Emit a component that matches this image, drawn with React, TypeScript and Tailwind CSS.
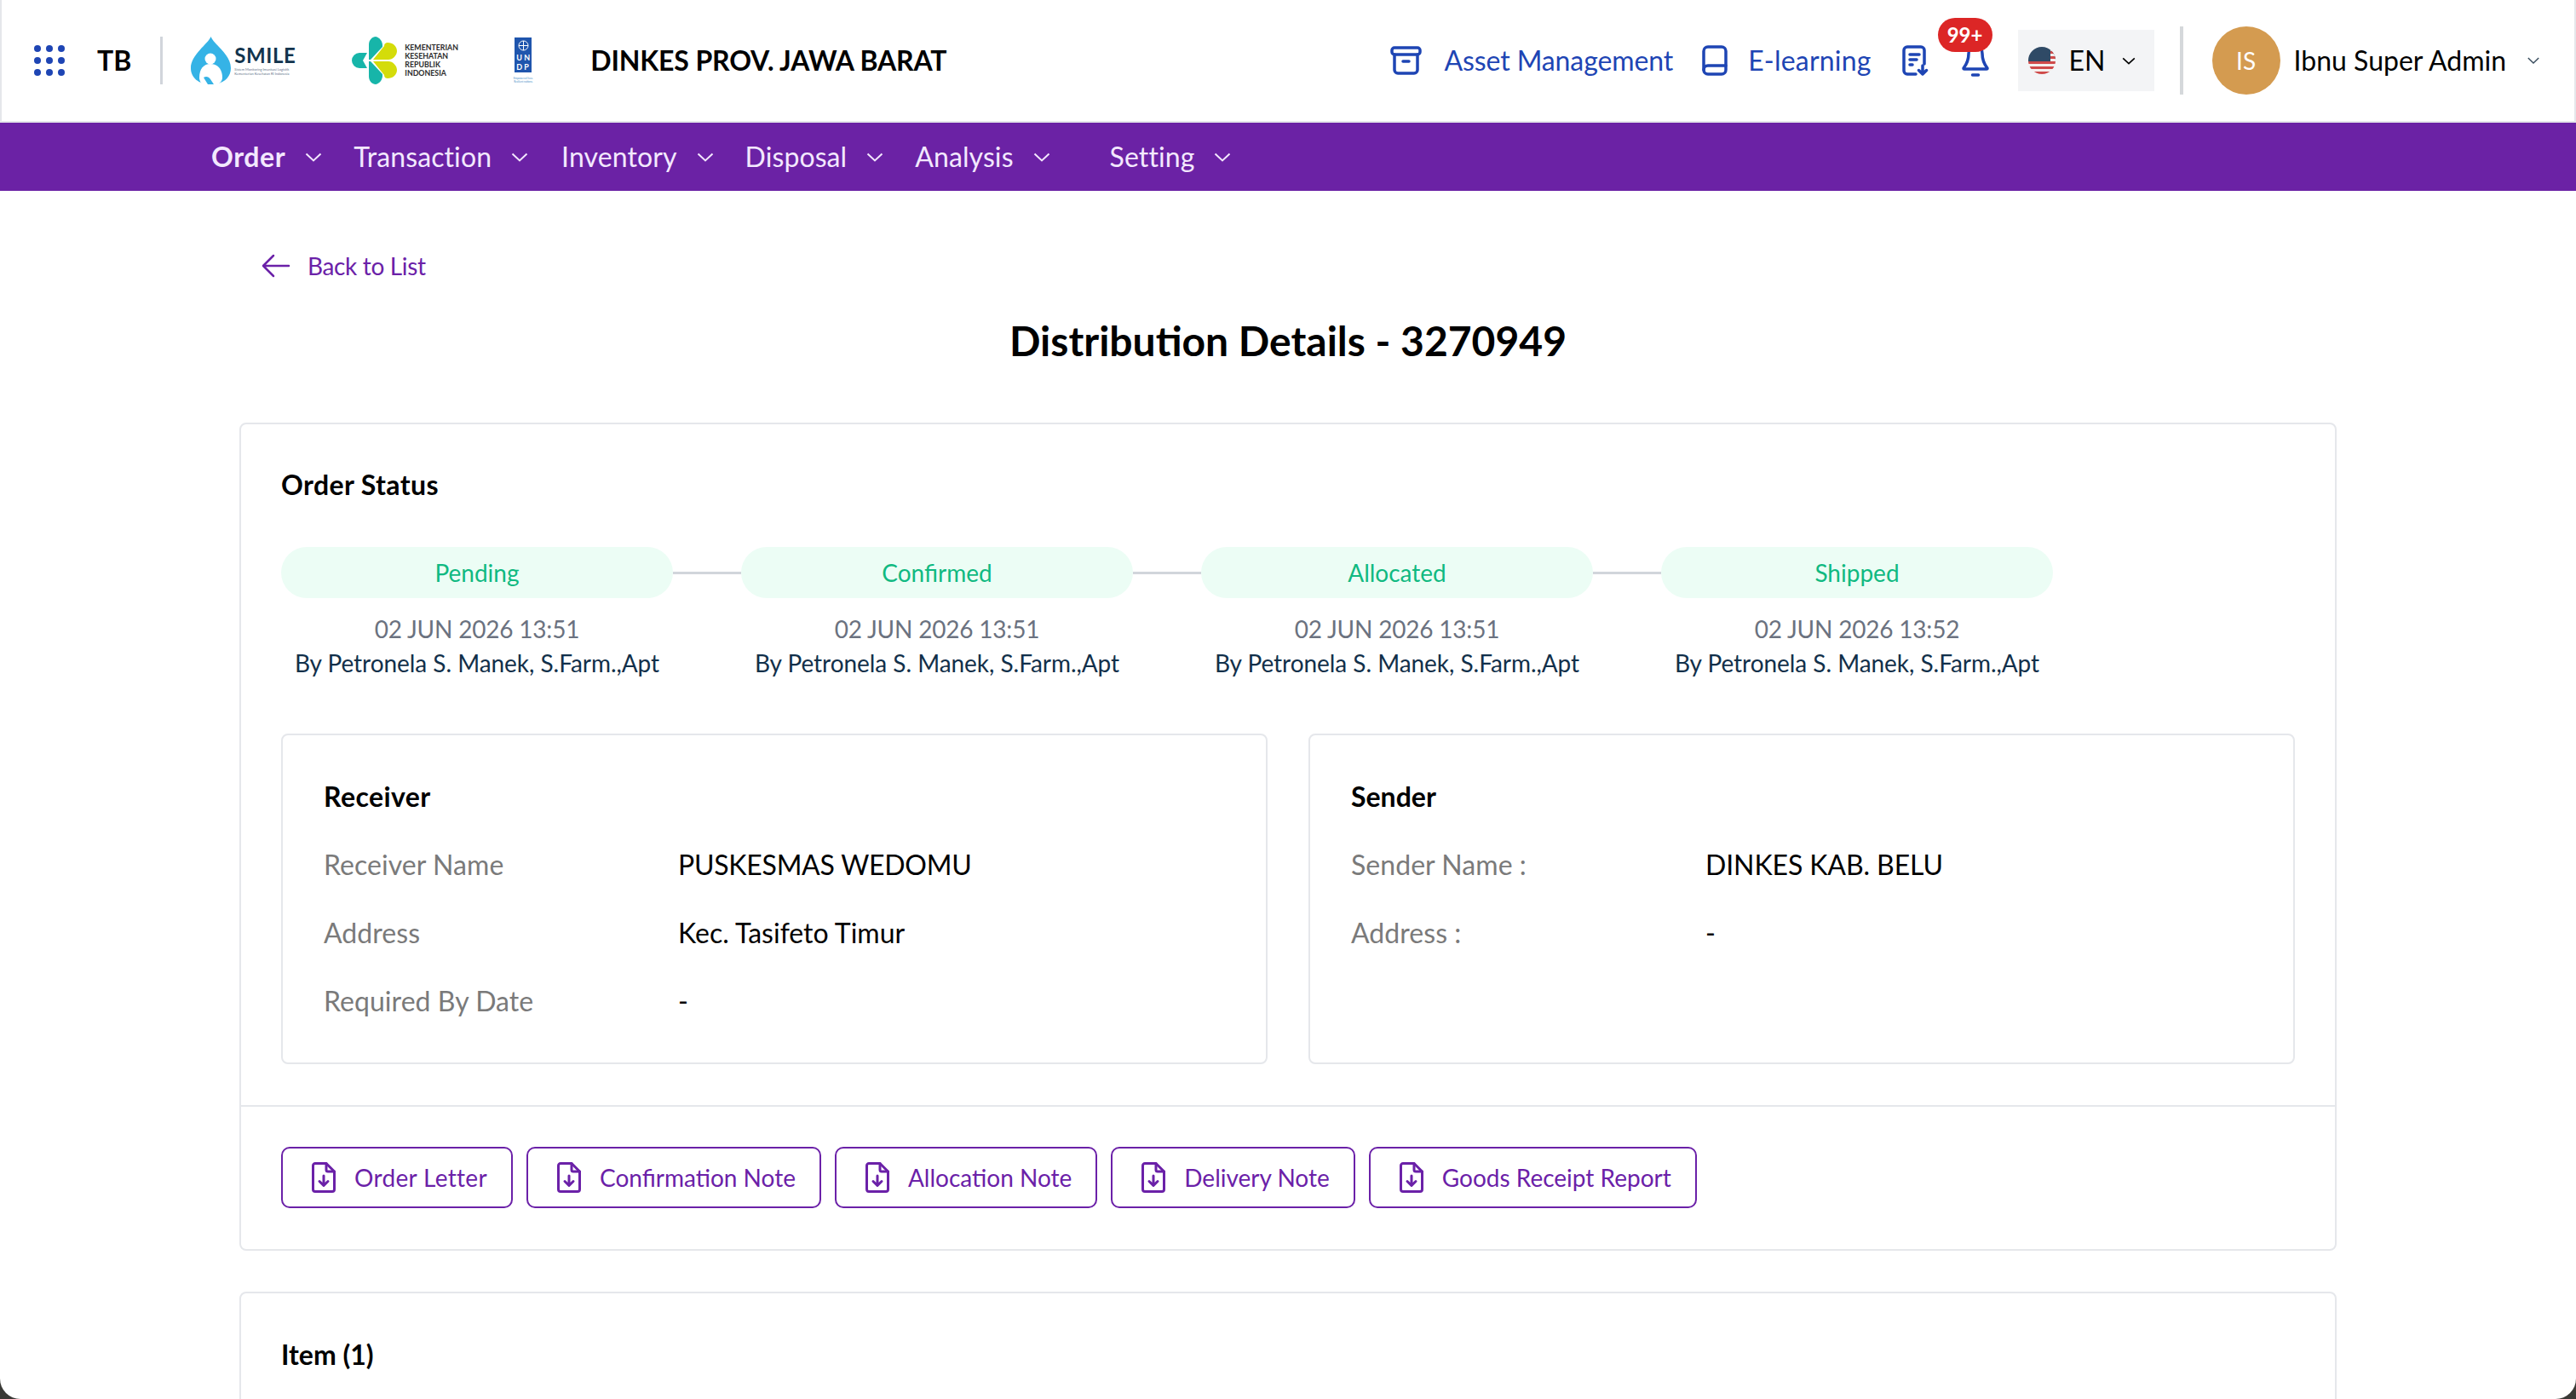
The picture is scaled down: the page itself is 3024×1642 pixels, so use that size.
import { type ReactNode } from 'react';

const navItems = [
  { label: 'Order', text: 'font-bold tracking-[0.6px]', gap: 'ml-0' },
  { label: 'Transaction', text: 'tracking-[0.1px]', gap: 'ml-[37px]' },
  { label: 'Inventory', text: 'tracking-[0.1px]', gap: 'ml-[39px]' },
  { label: 'Disposal', text: 'tracking-[0.1px]', gap: 'ml-[37px]' },
  { label: 'Analysis', text: 'tracking-[0.1px]', gap: 'ml-[37px]' },
  { label: 'Setting', text: 'tracking-[0.1px]', gap: 'ml-[70px]' },
];

const steps = [
  { label: 'Pending', date: '02 JUN 2026 13:51' },
  { label: 'Confirmed', date: '02 JUN 2026 13:51' },
  { label: 'Allocated', date: '02 JUN 2026 13:51' },
  { label: 'Shipped', date: '02 JUN 2026 13:52' },
];

const documents = [
  { name: 'Order Letter', text: 'tracking-[0.33px]' },
  { name: 'Confirmation Note', text: 'tracking-normal' },
  { name: 'Allocation Note', text: 'tracking-normal' },
  { name: 'Delivery Note', text: 'tracking-normal' },
  { name: 'Goods Receipt Report', text: 'tracking-normal' },
];

function Chevron({ className }: { className: string }) {
  return (
    <svg className={className} viewBox="0 0 20 11" fill="none" stroke="currentColor" strokeWidth="2">
      <path d="M1.5 1.5 10 9.5l8.5-8" />
    </svg>
  );
}

function AppGrid() {
  const dots = [4, 18, 32];
  return (
    <svg className="h-[36px] w-[36px]" viewBox="0 0 36 36" fill="#1e45b4">
      {dots.map((y) => dots.map((x) => <circle key={`${x}-${y}`} cx={x} cy={y} r="4" />))}
    </svg>
  );
}

function SmileLogo() {
  return (
    <div className="flex items-center">
      <svg className="h-[56px] w-[47px]" viewBox="0 0 47 56">
        <path d="M23.5 0C27 9 47 21 47 37c0 11-9 19-23.500 19S0 48 0 37C0 21 20 9 23.500 0Z" fill="#35b3e6" />
        <circle cx="23" cy="26" r="6.500" fill="#fff" />
        <path d="M10 48c0-10 5-16 13-16s14 6 14 16c0 4-3 7-6 8H15c-3-1-5-4-5-8Z" fill="#fff" />
        <path d="M15 48c3-2 6-1 8 2l4 6h-7l-5-8Z" fill="#35b3e6" />
      </svg>
      <div className="ml-[4px] flex w-[76px] flex-col">
        <span className="text-[24px] leading-[22px] font-bold tracking-[0.6px] text-[#12344d]">SMILE</span>
        <span className="mt-[3px] text-[4px] leading-[5px] whitespace-nowrap text-[#64748b]">
          Sistem Monitoring Imunisasi Logistik
          <br />
          Kementerian Kesehatan RI Indonesia
        </span>
      </div>
    </div>
  );
}

function KemkesLogo() {
  return (
    <div className="flex items-center">
      <svg className="h-[56px] w-[53px]" viewBox="0 0 53 56">
        <path d="M9 19h9l-5 9 5 9H9a9 9 0 0 1 0-18Z" fill="#17b5a9" />
        <path d="M20 27V9c0-5 4-9 8-9 5 1 8 6 8 10v2L22 27h-2Z" fill="#17b5a9" />
        <path d="M20 29v18c0 5 4 9 8 9 5-1 8-6 8-10v-2L22 29h-2Z" fill="#17b5a9" />
        <path d="M25 27 38 11c0-3 2-4 4-4 6 0 11 4 11 10 0 5-5 10-10 10H25Z" fill="#d4dc0a" />
        <path d="M25 29 38 45c0 3 2 4 4 4 6 0 11-4 11-10 0-5-5-10-10-10H25Z" fill="#d4dc0a" />
      </svg>
      <span className="ml-[9px] w-[63px] text-[8.800px] leading-[10px] font-bold text-[#2b2b2b]">
        KEMENTERIAN
        <br />
        KESEHATAN
        <br />
        REPUBLIK
        <br />
        INDONESIA
      </span>
    </div>
  );
}

function UndpLogo() {
  return (
    <div className="flex w-[26px] flex-col items-center">
      <div className="flex h-[41px] w-[20px] flex-col items-center bg-[#1f55ad] pt-[3px]">
        <svg className="h-[13px] w-[13px]" viewBox="0 0 13 13" fill="none" stroke="#fff" strokeWidth="1">
          <circle cx="6.500" cy="6.500" r="5.500" />
          <path d="M1 6.500h11M6.500 1v11" />
        </svg>
        <div className="mt-[2px] grid grid-cols-2 gap-x-[2px] text-[9px] leading-[11px] font-bold text-white">
          <span>U</span>
          <span>N</span>
          <span>D</span>
          <span>P</span>
        </div>
      </div>
      <span className="mt-[6px] text-center text-[3px] leading-[3.500px] whitespace-nowrap text-[#4a90c8]">
        Empowered lives.
        <br />
        Resilient nations.
      </span>
    </div>
  );
}

function UsFlag() {
  return (
    <svg className="h-[32px] w-[32px]" viewBox="0 0 32 32">
      <clipPath id="flag-clip">
        <circle cx="16" cy="16" r="16" />
      </clipPath>
      <g clipPath="url(#flag-clip)">
        <rect width="32" height="32" fill="#f4f0ee" />
        <rect y="17" width="32" height="3" fill="#cf4a4a" />
        <rect y="23" width="32" height="3" fill="#cf4a4a" />
        <rect y="29" width="32" height="3" fill="#cf4a4a" />
        <rect width="32" height="17" fill="#2f4a66" />
        <rect x="26" y="0" width="6" height="5" fill="#f4f0ee" />
        <rect x="26" y="5" width="6" height="3" fill="#cf4a4a" />
        <rect x="26" y="8" width="6" height="3" fill="#f4f0ee" />
        <rect x="26" y="11" width="6" height="3" fill="#cf4a4a" />
        <rect x="26" y="14" width="6" height="3" fill="#f4f0ee" />
      </g>
    </svg>
  );
}

function DownloadFileIcon() {
  return (
    <svg className="h-[36px] w-[28px] shrink-0" viewBox="0 0 28 36" fill="none" stroke="currentColor" strokeWidth="3" strokeLinecap="round" strokeLinejoin="round">
      <path d="M17 1.500H4A2.500 2.500 0 0 0 1.500 4v28A2.500 2.500 0 0 0 4 34.500h20a2.500 2.500 0 0 0 2.500-2.500V11L17 1.500Z" />
      <path d="M17 1.500V9a2 2 0 0 0 2 2h7.500" />
      <path d="M14 16v11M9 22.500l5 5 5-5" />
    </svg>
  );
}

function DetailPanel({ title, titleClass, rows }: { title: string; titleClass: string; rows: [string, string, string][] }) {
  return (
    <section className="h-[388px] w-[1158px] rounded-[8px] border-2 border-[#e5e7eb] px-[48px] pt-[52px]">
      <h3 className={`text-[32px] leading-[40px] font-bold text-black ${titleClass}`}>{title}</h3>
      {rows.map(([label, value, valueClass]) => (
        <div key={label} className="mt-[40px] flex text-[32px] leading-[40px]">
          <span className="w-[416px] tracking-[0.05px] text-[#7a7a7a]">{label}</span>
          <span className={`text-black ${valueClass}`}>{value}</span>
        </div>
      ))}
    </section>
  );
}

function Card({ children, className }: { children: ReactNode; className: string }) {
  return <section className={`mx-auto w-[2462px] rounded-[8px] border-2 border-[#e5e7eb] bg-white ${className}`}>{children}</section>;
}

export default function App() {
  return (
    <div className="h-[1642px] overflow-hidden bg-[#3a3a36] [font-family:Lato,sans-serif]">
      <div className="h-full overflow-hidden rounded-b-[24px] bg-white">
        <header className="flex h-[144px] items-center border-x-2 border-b-2 border-[#e5e7eb] bg-white pl-[38px]">
          <AppGrid />
          <span className="ml-[38px] text-[32px] font-bold text-black">TB</span>
          <div className="ml-[34px] h-[56px] w-[3px] bg-[#d1d5db]" />
          <div className="ml-[33px]">
            <SmileLogo />
          </div>
          <div className="ml-[62px]">
            <KemkesLogo />
          </div>
          <div className="ml-[63px]">
            <UndpLogo />
          </div>
          <span className="ml-[66px] text-[32px] font-bold tracking-[-0.15px] whitespace-nowrap text-black">DINKES PROV. JAWA BARAT</span>

          <div className="ml-auto flex items-center pr-[40px]">
            <svg className="h-[34px] w-[37px]" viewBox="0 0 37 34" fill="none" stroke="#1e45b4" strokeWidth="3.500" strokeLinecap="round" strokeLinejoin="round">
              <rect x="2" y="2" width="33" height="8" rx="3" />
              <path d="M5 10v18a4 4 0 0 0 4 4h19a4 4 0 0 0 4-4V10M15 18h7" />
            </svg>
            <span className="ml-[26px] text-[32px] tracking-[-0.1px] text-[#1e45b4]">Asset Management</span>
            <svg className="ml-[34px] h-[36px] w-[30px]" viewBox="0 0 30 36" fill="none" stroke="#1e45b4" strokeWidth="3.500" strokeLinecap="round" strokeLinejoin="round">
              <rect x="2" y="2" width="26" height="32" rx="5" />
              <path d="M2 29c0-3 2-5 5-5h21" />
            </svg>
            <span className="ml-[24px] text-[32px] tracking-[0.2px] text-[#1e45b4]">E-learning</span>
            <svg className="ml-[36px] h-[36px] w-[31px]" viewBox="0 0 31 36" fill="none" stroke="#1e45b4" strokeWidth="3.500" strokeLinecap="round" strokeLinejoin="round">
              <path d="M16 34H6a4 4 0 0 1-4-4V6a4 4 0 0 1 4-4h16a4 4 0 0 1 4 4v16" />
              <path d="M9 11h11M9 17h8M9 23h3M24 24v10M19.500 29.500l4.500 4.500 4.500-4.500" />
            </svg>
            <div className="relative ml-[39px] h-[38px] w-[32px]">
              <svg className="h-[38px] w-[32px]" viewBox="0 0 32 38" fill="none" stroke="#1e45b4" strokeWidth="3.500" strokeLinecap="round" strokeLinejoin="round">
                <path d="M16 2c-5 0-8 4-8 9 0 8-2 12-6 17a1 1 0 0 0 1 1h26a1 1 0 0 0 1-1c-4-5-6-9-6-17 0-5-3-9-8-9Z" />
                <path d="M12.500 36h7" />
              </svg>
              <span className="absolute top-[-31px] left-[-28px] flex h-[40px] w-[64px] items-center justify-center rounded-full bg-[#dc2626] text-[24px] font-bold text-white">99+</span>
            </div>
            <div className="ml-[34px] flex h-[72px] w-[160px] items-center bg-[#f3f4f6] pl-[12px]">
              <UsFlag />
              <span className="ml-[16px] text-[32px] text-black">EN</span>
              <Chevron className="ml-[20px] h-[9px] w-[16px] text-black" />
            </div>
            <div className="ml-[30px] h-[80px] w-[4px] bg-[#d5d8db]" />
            <div className="ml-[34px] flex h-[80px] w-[80px] items-center justify-center rounded-full bg-[#d49b50] text-[28px] text-white">IS</div>
            <span className="ml-[16px] text-[32px] text-black">Ibnu Super Admin</span>
            <Chevron className="ml-[24px] h-[8px] w-[16px] text-[#374b5c]" />
          </div>
        </header>

        <nav className="flex h-[80px] items-center bg-[#6b22a5] pl-[248px] text-[32px] text-[#f3e8ff]">
          {navItems.map((item) => (
            <div key={item.label} className={`flex items-center ${item.gap}`}>
              <span className={item.text}>{item.label}</span>
              <Chevron className="ml-[23px] h-[11px] w-[20px]" />
            </div>
          ))}
        </nav>

        <main>
          <a className="mt-[68px] ml-[307px] flex h-[40px] items-center text-[28px] text-[#6b21a8]">
            <svg className="h-[28px] w-[34px]" viewBox="0 0 34 28" fill="none" stroke="currentColor" strokeWidth="2.500" strokeLinecap="round" strokeLinejoin="round">
              <path d="M32 14H2M14 2 2 14l12 12" />
            </svg>
            <span className="ml-[20px] tracking-[-0.35px]">Back to List</span>
          </a>
          <h1 className="mt-[36px] text-center text-[48px] leading-[64px] font-bold text-black">Distribution Details - 3270949</h1>

          <Card className="mt-[64px]">
            <div className="px-[47px] pt-[51px] pb-[48px]">
              <h2 className="text-[32px] leading-[40px] font-bold tracking-[0.4px] text-black">Order Status</h2>
              <div className="mt-[53px] flex">
                {steps.map((step, index) => (
                  <div key={step.label} className="flex">
                    {index > 0 && <div className="mt-[29px] h-[3px] w-[80px] bg-[#d1d5db]" />}
                    <div className="flex w-[460px] flex-col items-center text-[28px] leading-[40px]">
                      <div className="flex h-[60px] w-full items-center justify-center rounded-full bg-[#ecfdf5] text-[#10b981]">{step.label}</div>
                      <span className="mt-[16px] tracking-[-0.2px] text-[#6b7280]">{step.date}</span>
                      <span className="tracking-[-0.05px] text-[#12304a]">By Petronela S. Manek, S.Farm.,Apt</span>
                    </div>
                  </div>
                ))}
              </div>
              <div className="mt-[63px] flex gap-[48px]">
                <DetailPanel
                  title="Receiver"
                  titleClass="tracking-[0.4px]"
                  rows={[
                    ['Receiver Name', 'PUSKESMAS WEDOMU', 'tracking-[-0.25px]'],
                    ['Address', 'Kec. Tasifeto Timur', 'tracking-normal'],
                    ['Required By Date', '-', 'tracking-normal'],
                  ]}
                />
                <DetailPanel
                  title="Sender"
                  titleClass="tracking-normal"
                  rows={[
                    ['Sender Name :', 'DINKES KAB. BELU', 'tracking-[-0.1px]'],
                    ['Address :', '-', 'tracking-normal'],
                  ]}
                />
              </div>
            </div>
            <div className="flex gap-[16px] border-t-2 border-[#e5e7eb] px-[47px] pt-[47px] pb-[48px]">
              {documents.map((doc) => (
                <button key={doc.name} className="flex h-[72px] items-center rounded-[10px] border-2 border-[#6b21a8] pr-[28px] pl-[34px] text-[28px] text-[#6b21a8]">
                  <DownloadFileIcon />
                  <span className={`ml-[22px] ${doc.text}`}>{doc.name}</span>
                </button>
              ))}
            </div>
          </Card>

          <Card className="mt-[48px] h-[300px] px-[47px] pt-[52px]">
            <h2 className="text-[32px] leading-[40px] font-bold text-black">Item (1)</h2>
          </Card>
        </main>
      </div>
    </div>
  );
}
